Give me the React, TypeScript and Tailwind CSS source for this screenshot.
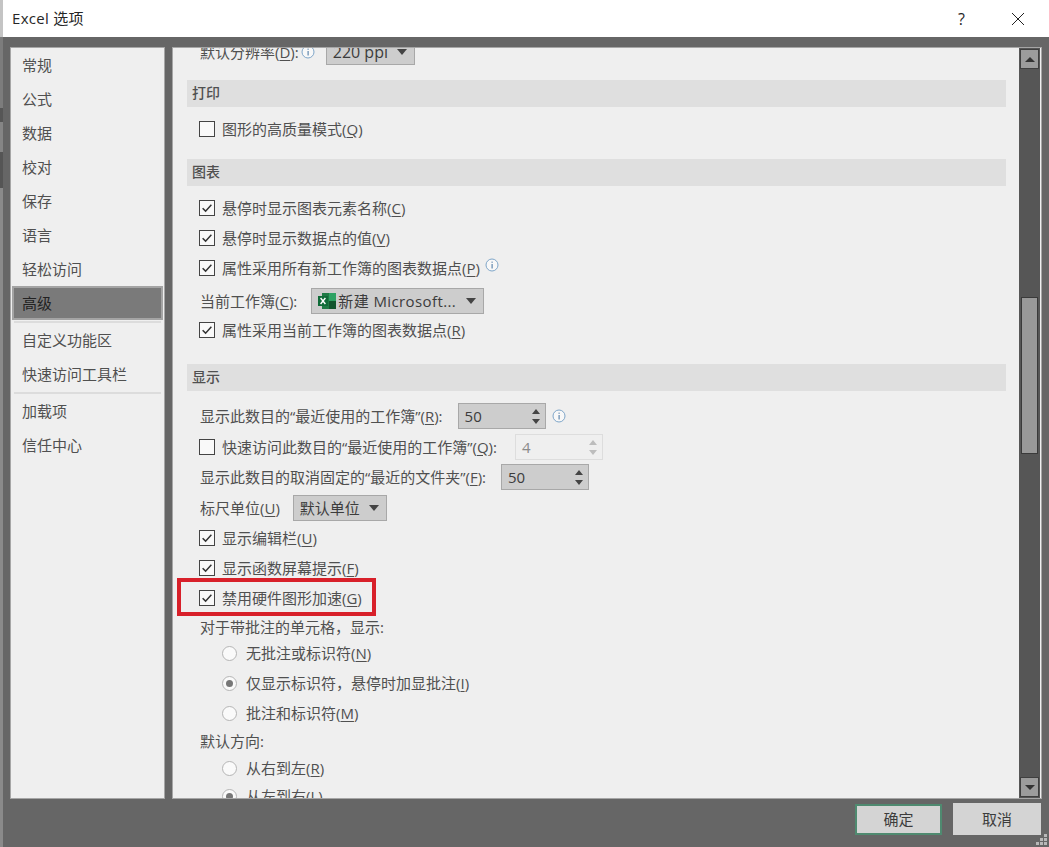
import React from "react";

const Check = () => (
  <svg viewBox="0 0 16 16" className="w-[14px] h-[14px]" fill="none">
    <path d="M3 8.2 6.4 11.6 13 4.2" stroke="#333333" strokeWidth="1.7" />
  </svg>
);

const CheckBox = ({ on }: { on?: boolean }) => (
  <span className="w-[16px] h-[16px] shrink-0 border border-[#444444] bg-[#f9f9f9] flex items-center justify-center">
    {on ? <Check /> : null}
  </span>
);

const Info = () => (
  <svg viewBox="0 0 14 14" className="w-[14px] h-[14px] shrink-0">
    <circle cx="7" cy="7" r="6" fill="#f8f8f8" stroke="#7fa6c9" strokeWidth="1" />
    <rect x="6.5" y="6" width="1.2" height="4.5" fill="#5f86ad" />
    <rect x="6.5" y="3.6" width="1.2" height="1.2" fill="#5f86ad" />
  </svg>
);

const Key = ({ k }: { k: string }) => (
  <>
    (<span className="underline underline-offset-2">{k}</span>)
  </>
);

const Header = ({ title, cls }: { title: string; cls: string }) => (
  <div className={`h-[27px] bg-[#dfdfdf] flex items-center pl-[5px] pb-[2px] text-[14px] font-medium text-[#505050] ${cls}`}>
    {title}
  </div>
);

const CheckRow = ({ on, label, k, h = "h-[30px]", extra }: { on?: boolean; label: string; k: string; h?: string; extra?: React.ReactNode }) => (
  <div className={`${h} flex items-center pl-[12px]`}>
    <CheckBox on={on} />
    <span className="ml-[7px]">
      {label}
      <Key k={k} />
    </span>
    {extra}
  </div>
);

const RadioRow = ({ on, label, k, h = "h-[30px]" }: { on?: boolean; label: string; k: string; h?: string }) => (
  <div className={`${h} flex items-center pl-[35px]`}>
    <span className="w-[15px] h-[15px] rounded-full border border-[#b5b5b5] bg-[#fafafa] flex items-center justify-center shrink-0">
      {on ? <span className="w-[7px] h-[7px] rounded-full bg-[#777777]" /> : null}
    </span>
    <span className="ml-[9px]">
      {label}
      <Key k={k} />
    </span>
  </div>
);

const Caret = () => (
  <svg viewBox="0 0 10 6" className="w-[10px] h-[6px] shrink-0">
    <path d="M0 0H10L5 6Z" fill="#444444" />
  </svg>
);

const Select = ({ w, children }: { w: string; children: React.ReactNode }) => (
  <div className={`${w} h-[26px] bg-[#cdcdcd] border border-[#a8a8a8] flex items-center justify-between pl-[6px] pr-[7px] text-[#3c3c3c]`}>
    {children}
  </div>
);

const Spin = ({ value, disabled, ml }: { value: string; disabled?: boolean; ml: string }) => (
  <div className={`${ml} w-[88px] h-[26px] border flex items-center justify-between pl-[6px] pr-[4px] ${disabled ? "border-[#dddddd] text-[#8a8a8a]" : "bg-[#cdcdcd] border-[#a8a8a8] text-[#3c3c3c]"}`}>
    <span className="text-[15px]">{value}</span>
    <svg viewBox="0 0 10 17" className="w-[10px] h-[17px]">
      <path d="M5 1 9 6H1Z M1 11H9L5 16Z" fill={disabled ? "#bdbdbd" : "#444444"} />
    </svg>
  </div>
);

const Nav = ({ children, active }: { children: string; active?: boolean }) => (
  <div className={active ? "h-[34px] mx-px flex items-center pl-[8px] bg-[#7a7a7a] border-2 border-[#a4a4a4] text-[#222222]" : "h-[34px] flex items-center pl-[11px]"}>
    <span>{children}</span>
  </div>
);

const Sep = ({ cls }: { cls: string }) => <div className={`mx-[3px] h-[2px] bg-[#dcdcdc] ${cls}`} />;

const ScrollBtn = ({ up }: { up?: boolean }) => (
  <div className="h-[20px] mx-px bg-[#9c9c9c] border border-[#3f3f3f] flex items-center justify-center">
    <svg viewBox="0 0 10 5" className="w-[10px] h-[5px]">
      <path d={up ? "M5 0 10 5H0Z" : "M0 0H10L5 5Z"} fill="#333333" />
    </svg>
  </div>
);

export default function App() {
  return (
    <div className="w-[1049px] h-[847px] overflow-hidden flex bg-[#666666] font-['Open_Sans','Noto_Sans_CJK_SC',sans-serif] text-[15px] leading-none text-[#505050]">
      <div className="w-[3px] shrink-0 flex flex-col bg-[#8a8a8a]">
        <div className="h-[37px] bg-[#c4c4c4]" />
        <div className="h-[71px] bg-[#7c7c7c]" />
        <div className="h-[14px] bg-[#565656]" />
        <div className="h-[30px] bg-[#858585]" />
        <div className="h-[36px] bg-[#555555]" />
      </div>
      <div className="flex-1 min-w-0 flex flex-col">
        <div className="h-[37px] shrink-0 bg-white flex items-center justify-between pl-[9px] pr-[24px] text-[#262626]">
          <span className="text-[15px] tracking-[0.3px]">Excel 选项</span>
          <div className="flex items-center gap-[46px]">
            <span className="text-[16px]">?</span>
            <svg viewBox="0 0 14 14" className="w-[14px] h-[14px]">
              <path d="M1 1 13 13M13 1 1 13" stroke="#222222" strokeWidth="1" fill="none" />
            </svg>
          </div>
        </div>
        <div className="h-[761px] shrink-0 flex gap-[7px] pt-[10px] pl-[7px] pr-[7px]">
          <div className="w-[155px] h-[752px] bg-[#efefef] border border-[#a6a6a6] flex flex-col">
            <Nav>常规</Nav>
            <Nav>公式</Nav>
            <Nav>数据</Nav>
            <Nav>校对</Nav>
            <Nav>保存</Nav>
            <Nav>语言</Nav>
            <Nav>轻松访问</Nav>
            <Nav active>高级</Nav>
            <Sep cls="mt-px" />
            <Nav>自定义功能区</Nav>
            <Nav>快速访问工具栏</Nav>
            <Sep cls="mt-px" />
            <Nav>加载项</Nav>
            <Nav>信任中心</Nav>
          </div>
          <div className="flex-1 min-w-0 h-[752px] bg-[#efefef] border border-[#a6a6a6] flex">
            <div className="flex-1 min-w-0 overflow-hidden pl-[14px] pr-[13px]">
              <div className="-mt-[9px]">
                <div className="h-[26px] flex items-center pl-[13px]">
                  <span>默认分辨率<Key k="D" />:</span>
                  <span className="self-start mt-[6px] ml-[2px]"><Info /></span>
                  <span className="ml-[11px]">
                    <Select w="w-[89px]">
                      <span className="text-[16px]">220 ppi</span>
                      <Caret />
                    </Select>
                  </span>
                </div>
                <Header title="打印" cls="mt-[15px]" />
                <div className="mt-[7px]">
                  <CheckRow label="图形的高质量模式" k="Q" />
                </div>
                <Header title="图表" cls="mt-[15px]" />
                <div className="mt-[7px]">
                  <CheckRow on label="悬停时显示图表元素名称" k="C" />
                  <CheckRow on label="悬停时显示数据点的值" k="V" />
                  <CheckRow on label="属性采用所有新工作簿的图表数据点" k="P" extra={<span className="self-start mt-[5px] ml-[5px]"><Info /></span>} />
                </div>
                <div className="mt-[3px] h-[30px] flex items-center pl-[13px]">
                  <span>当前工作簿<Key k="C" />:</span>
                  <span className="ml-[14px]">
                    <Select w="w-[173px]">
                      <span className="flex items-center">
                        <svg viewBox="0 0 18 16" className="w-[18px] h-[16px] shrink-0">
                          <rect x="4" y="0" width="14" height="16" fill="#1f7a45" />
                          <rect x="11" y="0" width="7" height="8" fill="#2ea263" />
                          <rect x="11" y="8" width="7" height="8" fill="#12562e" />
                          <rect x="0" y="3" width="10" height="10" fill="#0f6b38" />
                          <path d="M2.6 5 7.4 11M7.4 5 2.6 11" stroke="#ffffff" strokeWidth="1.4" />
                        </svg>
                        <span className="ml-[2px] tracking-[0.4px]">新建 Microsoft...</span>
                      </span>
                      <Caret />
                    </Select>
                  </span>
                </div>
                <CheckRow on h="h-[28px]" label="属性采用当前工作簿的图表数据点" k="R" />
                <Header title="显示" cls="mt-[20px]" />
                <div className="mt-[10px] h-[30px] flex items-center pl-[13px]">
                  <span>显示此数目的“最近使用的工作簿”<Key k="R" />:</span>
                  <Spin value="50" ml="ml-[15px]" />
                  <span className="ml-[6px]"><Info /></span>
                </div>
                <div className="mt-px">
                  <CheckRow
                    label="快速访问此数目的“最近使用的工作簿”"
                    k="Q"
                    extra={<><span>:</span><Spin value="4" disabled ml="ml-[18px]" /></>}
                  />
                </div>
                <div className="h-[30px] flex items-center pl-[13px]">
                  <span>显示此数目的取消固定的“最近的文件夹”<Key k="F" />:</span>
                  <Spin value="50" ml="ml-[15px]" />
                </div>
                <div className="mt-px h-[30px] flex items-center pl-[13px]">
                  <span>标尺单位<Key k="U" /></span>
                  <span className="ml-[13px]">
                    <Select w="w-[94px]">
                      <span>默认单位</span>
                      <Caret />
                    </Select>
                  </span>
                </div>
                <CheckRow on label="显示编辑栏" k="U" />
                <CheckRow on label="显示函数屏幕提示" k="F" />
                <div className="relative">
                  <CheckRow on label="禁用硬件图形加速" k="G" />
                  <div className="absolute left-[-10px] top-[-5px] w-[199px] h-[38px] border-[4px] border-[#d8202a]" />
                </div>
                <div className="h-[22px] flex items-center pl-[13px] mt-[3px]">对于带批注的单元格，显示:</div>
                <RadioRow label="无批注或标识符" k="N" />
                <RadioRow on label="仅显示标识符，悬停时加显批注" k="I" />
                <RadioRow label="批注和标识符" k="M" />
                <div className="h-[27px] flex items-center pl-[13px]">默认方向:</div>
                <RadioRow h="h-[26px]" label="从右到左" k="R" />
                <RadioRow h="h-[30px]" on label="从左到右" k="L" />
              </div>
            </div>
            <div className="w-[21px] shrink-0 bg-[#565656] pt-px flex flex-col mr-px">
              <ScrollBtn up />
              <div className="mt-[228px] h-[157px] mx-[2px] bg-[#999999] border border-[#3a3a3a]" />
              <div className="mt-[323px]">
                <ScrollBtn />
              </div>
            </div>
          </div>
        </div>
        <div className="relative flex-1 flex justify-end gap-[11px] pr-[8px] text-[#3c3c3c]">
          <div className="mt-[6px] w-[87px] h-[31px] bg-[#d4d4d4] border-2 border-[#4f8a70] flex items-center justify-center">确定</div>
          <div className="mt-[5px] w-[88px] h-[32px] bg-[#d4d4d4] flex items-center justify-center">取消</div>
          <svg viewBox="0 0 11 11" className="absolute right-[2px] bottom-[2px] w-[11px] h-[11px]">
            <path d="M8 0h3v3H8zM4 4h3v3H4zM8 4h3v3H8zM0 8h3v3H0zM4 8h3v3H4zM8 8h3v3H8z" fill="#b8b8b8" />
          </svg>
        </div>
      </div>
    </div>
  );
}
